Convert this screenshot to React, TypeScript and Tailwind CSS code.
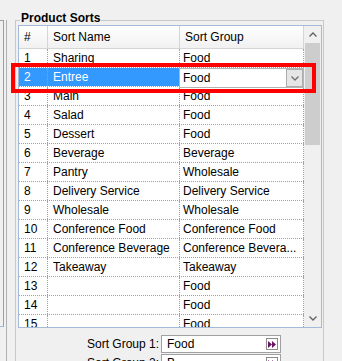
import React from 'react';

const rows = [
  { id: 1, name: 'Sharing', group: 'Food' },
  { id: 2, name: 'Entree', group: 'Food' },
  { id: 3, name: 'Main', group: 'Food' },
  { id: 4, name: 'Salad', group: 'Food' },
  { id: 5, name: 'Dessert', group: 'Food' },
  { id: 6, name: 'Beverage', group: 'Beverage' },
  { id: 7, name: 'Pantry', group: 'Wholesale' },
  { id: 8, name: 'Delivery Service', group: 'Delivery Service' },
  { id: 9, name: 'Wholesale', group: 'Wholesale' },
  { id: 10, name: 'Conference Food', group: 'Conference Food' },
  { id: 11, name: 'Conference Beverage', group: 'Conference Bevera...' },
  { id: 12, name: 'Takeaway', group: 'Takeaway' },
  { id: 13, name: '', group: 'Food' },
  { id: 14, name: '', group: 'Food' },
  { id: 15, name: '', group: 'Food' },
];

function Chevron({ up, color = '#606060' }: { up?: boolean; color?: string }) {
  return (
    <svg width="8" height="5" viewBox="0 0 8 5">
      <path
        d={up ? 'M0.5 4.5 L4 1 L7.5 4.5' : 'M0.5 0.5 L4 4 L7.5 0.5'}
        fill="none"
        stroke={color}
        strokeWidth="1.3"
      />
    </svg>
  );
}

function FastForward() {
  return (
    <svg width="8" height="7" viewBox="0 0 8 7">
      <path d="M0 0 L4 3.5 L0 7 Z M4 0 L8 3.5 L4 7 Z" fill="#6a1465" />
    </svg>
  );
}

function PickerField({ label, value }: { label: string; value: string }) {
  return (
    <div className="flex items-center h-[18px]">
      <div className="w-[141px] text-right leading-[18px]">{label}</div>
      <div className="ml-[2px] w-[120px] h-[18px] border border-[#a0a0a0] bg-white flex items-center pl-[5px] pr-[2px]">
        <span className="leading-[16px]">{value}</span>
        <div className="ml-auto w-[12px] h-[12px] border border-[#8a8a8a] bg-white flex items-center justify-center">
          <FastForward />
        </div>
      </div>
    </div>
  );
}

export default function App() {
  return (
    <div className="relative w-[342px] h-[361px] overflow-hidden bg-[#f0f0f0] flex font-['Liberation_Sans',Arial,sans-serif] text-[12px] text-black">
      {/* neighbouring panel edge */}
      <div className="mt-[20px] w-[4px] h-[307px] border-t border-r border-b border-t-[#a0a0a0] border-r-[#a0a0a0] border-b-[#a3bbd9]" />
      <div className="ml-[2px] mt-[20px] w-px h-[341px] bg-[#b0b0b0]" />

      {/* Product Sorts group box */}
      <div className="relative ml-[8px] mt-[20px] w-[309px] h-[400px] border border-[#c8c8c8] pl-[2px] pt-[4px] pr-px">
        <span className="absolute left-[4px] -top-[10px] px-px bg-[#f0f0f0] font-bold leading-[14px]">
          Product Sorts
        </span>

        <div className="w-[304px] h-[303px] border border-[#a3bbd9] bg-white flex overflow-hidden">
          <div className="w-[285px] flex flex-col">
            {/* header */}
            <div className="flex h-[23px] shrink-0 bg-gradient-to-b from-white to-[#f0f0f0]">
              <div className="w-[29px] pl-[5px] leading-[22px] border-r border-b border-[#d5d5d5]">#</div>
              <div className="w-[132px] pl-[5px] leading-[22px] border-r border-b border-[#d5d5d5]">Sort Name</div>
              <div className="w-[124px] pl-[5px] leading-[22px] border-r border-b border-[#d5d5d5]">Sort Group</div>
            </div>

            {/* rows */}
            {rows.map((r) => {
              const selected = r.id === 2;
              return (
                <div key={r.id} className="flex h-[19px] shrink-0 border-b border-dotted border-[#a0a0a0]">
                  <div
                    className={`w-[29px] pl-[5px] leading-[18px] border-r border-dotted border-[#a0a0a0] ${
                      selected ? 'bg-[#3399ff] text-white' : ''
                    }`}
                  >
                    {r.id}
                  </div>
                  <div
                    className={`w-[132px] pl-[5px] leading-[18px] whitespace-nowrap border-r border-dotted border-[#a0a0a0] ${
                      selected ? 'bg-[#3399ff] text-white' : ''
                    }`}
                  >
                    {r.name}
                  </div>
                  <div className="relative w-[124px] pl-[3px] leading-[18px] whitespace-nowrap border-r border-dotted border-[#a0a0a0]">
                    {selected ? (
                      <div className="absolute -left-px top-0 w-[125px] h-[20px] border border-[#b4b4b4] bg-white flex items-center pl-[3px] z-10">
                        <span className="leading-[18px]">{r.group}</span>
                        <div className="ml-auto w-[17px] h-[18px] border border-[#adadad] bg-[#e6e6e6] flex items-center justify-center">
                          <Chevron color="#707070" />
                        </div>
                      </div>
                    ) : (
                      r.group
                    )}
                  </div>
                </div>
              );
            })}
          </div>

          {/* scrollbar */}
          <div className="w-[17px] h-full bg-[#f0f0f0] flex flex-col">
            <div className="h-[17px] flex items-center justify-center">
              <Chevron up />
            </div>
            <div className="ml-px w-[15px] h-[102px] bg-[#cdcdcd]" />
            <div className="flex-1" />
            <div className="h-[17px] flex items-center justify-center">
              <Chevron />
            </div>
          </div>
        </div>

        <div className="mt-[7px] flex flex-col gap-[1px]">
          <PickerField label="Sort Group 1:" value="Food" />
          <PickerField label="Sort Group 2:" value="B" />
        </div>
      </div>

      {/* highlight annotation */}
      <div className="absolute left-[11px] top-[63px] w-[305px] h-[30px] border-[4px] border-[#ff0000]" />
    </div>
  );
}
